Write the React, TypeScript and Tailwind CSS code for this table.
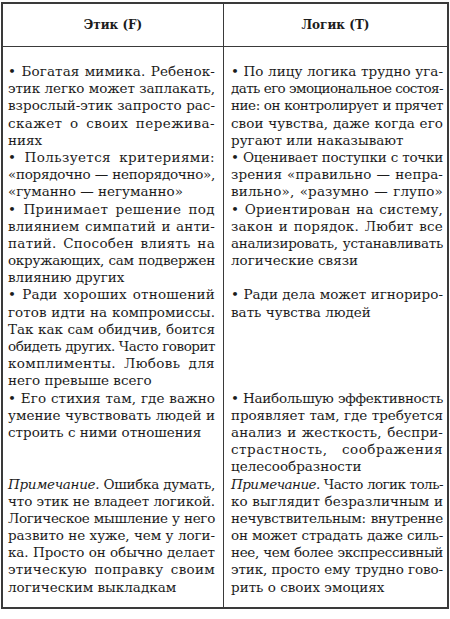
import React, { useLayoutEffect, useRef } from "react";

type Line = { t: React.ReactNode; a?: "l" | "j" };

const J = (t: React.ReactNode): Line => ({ t, a: "j" });
const L = (t: React.ReactNode): Line => ({ t, a: "l" });
const B: Line = { t: "\u00a0", a: "l" };

const left: Line[] = [
  J("• Богатая мимика. Ребенок-"),
  J("этик легко может заплакать,"),
  J("взрослый-этик запросто рас-"),
  J("скажет о своих пережива-"),
  L("ниях"),
  J("• Пользуется критериями:"),
  J("«порядочно — непорядочно»,"),
  L("«гуманно — негуманно»"),
  J("• Принимает решение под"),
  J("влиянием симпатий и анти-"),
  J("патий. Способен влиять на"),
  J("окружающих, сам подвержен"),
  L("влиянию других"),
  J("• Ради хороших отношений"),
  J("готов идти на компромиссы."),
  J("Так как сам обидчив, боится"),
  J("обидеть других. Часто говорит"),
  J("комплименты. Любовь для"),
  L("него превыше всего"),
  J("• Его стихия там, где важно"),
  J("умение чувствовать людей и"),
  L("строить с ними отношения"),
  B,
  B,
  J(
    <>
      <i>Примечание.</i> Ошибка думать,
    </>
  ),
  J("что этик не владеет логикой."),
  J("Логическое мышление у него"),
  J("развито не хуже, чем у логи-"),
  J("ка. Просто он обычно делает"),
  J("этическую поправку своим"),
  L("логическим выкладкам"),
];

const right: Line[] = [
  J("• По лицу логика трудно уга-"),
  J("дать его эмоциональное состоя-"),
  J("ние: он контролирует и прячет"),
  J("свои чувства, даже когда его"),
  L("ругают или наказывают"),
  J("• Оценивает поступки с точки"),
  J("зрения «правильно — непра-"),
  J("вильно», «разумно — глупо»"),
  J("• Ориентирован на систему,"),
  J("закон и порядок. Любит все"),
  J("анализировать, устанавливать"),
  L("логические связи"),
  B,
  J("• Ради дела может игнориро-"),
  L("вать чувства людей"),
  B,
  B,
  B,
  B,
  J("• Наибольшую эффективность"),
  J("проявляет там, где требуется"),
  J("анализ и жесткость, беспри-"),
  J("страстность, соображения"),
  L("целесообразности"),
  J(
    <>
      <i>Примечание.</i> Часто логик толь-
    </>
  ),
  J("ко выглядит безразличным и"),
  J("нечувствительным: внутренне"),
  J("он может страдать даже силь-"),
  J("нее, чем более экспрессивный"),
  J("этик, просто ему трудно гово-"),
  L("рить о своих эмоциях"),
];

function JustLine({ children }: { children: React.ReactNode }) {
  const outer = useRef<HTMLDivElement>(null);
  const inner = useRef<HTMLSpanElement>(null);
  useLayoutEffect(() => {
    const fit = () => {
      const o = outer.current;
      const s = inner.current;
      if (!o || !s) return;
      s.style.letterSpacing = "0px";
      o.style.textAlignLast = "left";
      o.style.textAlign = "left";
      const w = s.getBoundingClientRect().width;
      const cw = o.clientWidth;
      o.style.textAlignLast = "";
      o.style.textAlign = "";
      const gap = cw - w;
      const n = Math.max(1, (s.textContent || "").length);
      const ls = gap > 0 ? (gap * 0.55) / n : gap / n - 0.03;
      s.style.letterSpacing = `${ls}px`;
    };
    fit();
    if (document.fonts && document.fonts.ready) document.fonts.ready.then(fit);
  }, []);
  return (
    <div
      ref={outer}
      className="w-full h-[17.2px] leading-[17.2px] whitespace-nowrap text-justify [text-align-last:justify]"
    >
      <span ref={inner}>{children}</span>
    </div>
  );
}

function Column({ lines }: { lines: Line[] }) {
  return (
    <div className="flex flex-col w-full">
      {lines.map((ln, i) =>
        ln.a === "j" ? (
          <JustLine key={i}>{ln.t}</JustLine>
        ) : (
          <div key={i} className="h-[17.2px] leading-[17.2px] whitespace-nowrap text-left">
            {ln.t}
          </div>
        )
      )}
    </div>
  );
}

export default function App() {
  return (
    <div className="w-[450px] h-[619px] bg-white pt-[2px] pl-[1px] font-['DejaVu_Serif'] text-[#1c1c1c]">
      <div className="w-[448px] border-2 border-[#3a3a3a]">
        <div className="flex h-[43px] border-b-[1.5px] border-[#3a3a3a]">
          <div className="w-[221px] shrink-0 border-r-[1.5px] border-[#3a3a3a] flex items-center justify-center text-[12px] font-bold">
            Этик (F)
          </div>
          <div className="w-[223px] shrink-0 flex items-center justify-center text-[12px] font-bold">
            Логик (T)
          </div>
        </div>
        <div className="flex text-[13.5px]">
          <div className="w-[221px] shrink-0 border-r-[1.5px] border-[#3a3a3a] pl-[5px] pr-[8px] pt-[16px] pb-[11px]">
            <Column lines={left} />
          </div>
          <div className="w-[223px] shrink-0 min-w-0 pl-[7px] pr-[4px] pt-[16px] pb-[11px]">
            <Column lines={right} />
          </div>
        </div>
      </div>
    </div>
  );
}
